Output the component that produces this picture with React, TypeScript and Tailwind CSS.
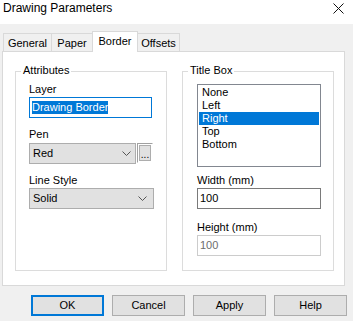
import React from "react"

const tabs = ["General", "Paper", "Border", "Offsets"]
const tabWidths: Record<string, string> = {
  General: "w-[48px] border-l",
  Paper: "w-[41px] border-l",
  Border: "w-[46px] border-l border-r",
  Offsets: "w-[42px] border-r",
}

const titleBoxItems = ["None", "Left", "Right", "Top", "Bottom"]

function Chevron() {
  return (
    <svg width="9" height="5" viewBox="0 0 9 5" className="shrink-0">
      <path d="M0.5 0.5 L4.5 4.5 L8.5 0.5" fill="none" stroke="#555" strokeWidth="1" />
    </svg>
  )
}

function GroupBox({ title, className, children }: { title: string; className?: string; children: React.ReactNode }) {
  return (
    <div className={"relative w-[152px] h-[200px] border border-[#dcdcdc] " + (className || "")}>
      {/* legend sits over the top border */}
      <span className="absolute left-[5px] top-[-8px] bg-white px-[2px] leading-[13px]">{title}</span>
      {children}
    </div>
  )
}

export default function App() {
  return (
    <div
      className="w-[353px] h-[321px] bg-[#f0f0f0] text-[11px] leading-[13px] text-black overflow-hidden select-none"
      style={{ fontFamily: '"Liberation Sans", Arial, sans-serif' }}
    >
      {/* Title bar */}
      <div className="h-[24px] bg-white flex items-start justify-between pl-[3px] pr-[9px]">
        <span className="text-[12px] leading-[14px] pt-[1px]">Drawing Parameters</span>
        <svg width="11" height="11" viewBox="0 0 11 11" className="mt-[3px]">
          <path d="M0.5 0.5 L10.5 10.5 M10.5 0.5 L0.5 10.5" stroke="#111" strokeWidth="1" />
        </svg>
      </div>

      {/* Tabs */}
      <div className="relative z-10 flex items-end pl-[3px] mt-[7px] h-[20px]">
        {tabs.map((t) => {
          const active = t === "Border"
          return (
            <div
              key={t}
              className={
                "flex justify-center border-t border-[#d9d9d9] " +
                tabWidths[t] +
                (active
                  ? " h-[21px] -mb-px bg-white pt-[3px]"
                  : " h-[18px] bg-[#f0f0f0] pt-[3px]")
              }
            >
              {t}
            </div>
          )
        })}
      </div>

      {/* Tab page */}
      <div className="ml-[2px] w-[343px] h-[235px] bg-white border border-[#d9d9d9] flex gap-[15px] pl-[12px] pt-[19px]">
        <GroupBox title="Attributes" className="pl-[13px] pt-[11px]">
          <div>Layer</div>
          <div className="mt-[1px] w-[123px] h-[21px] border border-[#0078d7] flex items-center pl-[2px]">
            <span className="bg-[#0078d7] text-white">Drawing Border</span>
          </div>

          <div className="mt-[10px]">Pen</div>
          <div className="mt-[2px] flex items-start">
            <div className="w-[107px] h-[21px] bg-[#e1e1e1] border border-[#adadad] flex items-center justify-between pl-[3px] pr-[4px]">
              <span>Red</span>
              <Chevron />
            </div>
            <div className="ml-[1px] w-[16px] h-[20px] border border-[#a0a0a0] border-r-white border-b-white p-px">
              <div className="w-full h-full bg-[#e1e1e1] border border-[#adadad] flex items-end justify-center pb-[2px] leading-[6px] text-[10px]">
                ...
              </div>
            </div>
          </div>

          <div className="mt-[10px]">Line Style</div>
          <div className="mt-[1px] w-[125px] h-[21px] bg-[#e1e1e1] border border-[#adadad] flex items-center justify-between pl-[3px] pr-[6px]">
            <span>Solid</span>
            <Chevron />
          </div>
        </GroupBox>

        <GroupBox title="Title Box" className="pl-[14px] pt-[12px]">
          <div className="w-[124px] h-[83px] border border-[#828790] p-px">
            {titleBoxItems.map((item) => (
              <div
                key={item}
                className={"h-[13px] pl-[3px] " + (item === "Right" ? "bg-[#0078d7] text-white" : "")}
              >
                {item}
              </div>
            ))}
          </div>

          <div className="mt-[7px]">Width (mm)</div>
          <div className="mt-[1px] w-[124px] h-[21px] border border-[#7a7a7a] flex items-center pl-[2px]">
            100
          </div>

          <div className="mt-[12px]">Height (mm)</div>
          <div className="mt-[1px] w-[124px] h-[21px] border border-[#cccccc] flex items-center pl-[2px] text-[#6d6d6d]">
            100
          </div>
        </GroupBox>
      </div>

      {/* Buttons */}
      <div className="flex gap-[8px] pl-[31px] mt-[9px]">
        {["OK", "Cancel", "Apply", "Help"].map((b) => (
          <button
            key={b}
            className={
              "w-[73px] h-[21px] bg-[#e1e1e1] flex items-center justify-center " +
              (b === "OK" ? "border-2 border-[#0078d7]" : "border border-[#adadad]")
            }
          >
            {b}
          </button>
        ))}
      </div>
    </div>
  )
}
